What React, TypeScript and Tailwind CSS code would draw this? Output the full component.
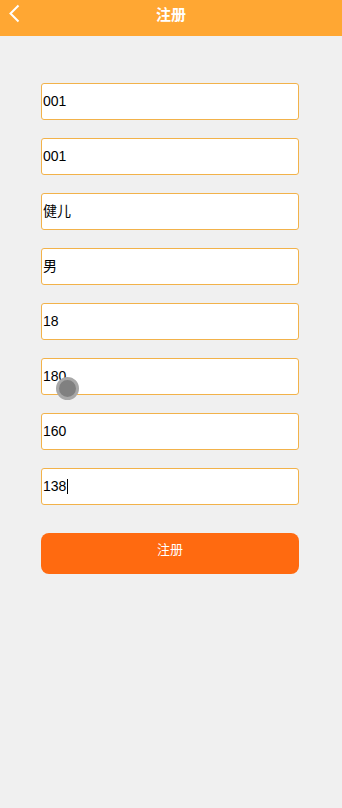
const fields = ["001", "001", "健儿", "男", "18", "180", "160", "138"];

const App = () => {
    return (
        <div className="relative min-h-[808px] w-full bg-[#f0f0f0]" style={{ fontFamily: '"Liberation Sans", "Noto Sans CJK SC", sans-serif' }}>
            <header className="relative flex h-[36px] items-center justify-center bg-[#ffa733] pb-[5px]">
                <svg className="absolute left-[8px] top-[4px]" width="12" height="19" viewBox="0 0 12 19" fill="none">
                    <path d="M10.5 1.5 L2.5 9.5 L10.5 17.5" stroke="white" strokeWidth="2" />
                </svg>
                <h1 className="text-[15px] font-bold text-white">注册</h1>
            </header>

            <div className="ml-[41px] flex w-[258px] flex-col gap-[18px] pt-[47px]">
                {fields.map((v, i) => (
                    <div key={i} className="flex h-[37px] items-center rounded-[3px] border border-[#f2b24a] bg-white pl-px text-[14px] text-black">
                        {v}
                        {i === fields.length - 1 && <span className="ml-px h-[15px] w-px bg-black" />}
                    </div>
                ))}
                <button className="mt-[10px] h-[41px] rounded-[8px] bg-[#ff6a10] pb-[7px] text-[13px] text-white">注册</button>
            </div>

            <div className="absolute left-[56px] top-[377px] h-[23px] w-[23px] rounded-full border-[3px] border-[#a8a8a8] bg-[#808080]" />
        </div>
    )
}

export default App
